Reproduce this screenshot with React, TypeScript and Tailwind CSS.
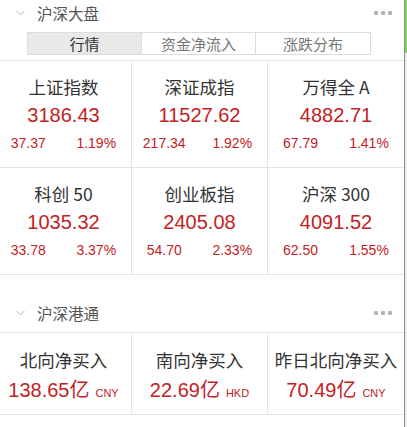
import React from "react";

const RED = "text-[#c2221f]";
const FONT = { fontFamily: '"Liberation Sans", "Noto Sans CJK SC", sans-serif' };

function Chevron() {
  return (
    <svg width="9" height="6" viewBox="0 0 9 6" className="shrink-0">
      <path d="M0.5 0.8 L4.5 4.8 L8.5 0.8" fill="none" stroke="#b0b0b0" strokeWidth="1" />
    </svg>
  );
}

function Dots() {
  return (
    <div className="flex gap-[3px] mr-[12px]">
      <span className="w-[4px] h-[4px] bg-[#b4b4b4] rounded-[1px]" />
      <span className="w-[4px] h-[4px] bg-[#b4b4b4] rounded-[1px]" />
      <span className="w-[4px] h-[4px] bg-[#b4b4b4] rounded-[1px]" />
    </div>
  );
}

function SectionTitle({ title }: { title: string }) {
  return (
    <div className="flex items-center h-[26px] pl-[16px]">
      <Chevron />
      <span className="ml-[12px] text-[15.5px] text-[#555] leading-[22px]" style={{ fontFamily: '"Noto Sans CJK SC", sans-serif' }}>
        {title}
      </span>
      <div className="flex-1" />
      <Dots />
    </div>
  );
}

type Idx = { name: string; value: string; chg: string; pct: string };

const rows: Idx[][] = [
  [
    { name: "上证指数", value: "3186.43", chg: "37.37", pct: "1.19%" },
    { name: "深证成指", value: "11527.62", chg: "217.34", pct: "1.92%" },
    { name: "万得全 A", value: "4882.71", chg: "67.79", pct: "1.41%" },
  ],
  [
    { name: "科创 50", value: "1035.32", chg: "33.78", pct: "3.37%" },
    { name: "创业板指", value: "2405.08", chg: "54.70", pct: "2.33%" },
    { name: "沪深 300", value: "4091.52", chg: "62.50", pct: "1.55%" },
  ],
];

const flows = [
  { name: "北向净买入", value: "138.65亿", unit: "CNY" },
  { name: "南向净买入", value: "22.69亿", unit: "HKD" },
  { name: "昨日北向净买入", value: "70.49亿", unit: "CNY" },
];

function IndexCard({ d, last }: { d: Idx; last: boolean }) {
  return (
    <div className={`flex flex-col items-center pt-[15px] ${last ? "" : "border-r border-[#e4e4e4]"}`}>
      <div className="text-[17.5px] leading-[22px] text-[#333]" style={{ fontFamily: '"Noto Sans CJK SC", sans-serif' }}>
        {d.name}
      </div>
      <div className={`mt-[3px] text-[20px] leading-[28px] ${RED}`}>{d.value}</div>
      <div className={`mt-[5px] w-full grid grid-cols-2 text-[14px] leading-[18px] ${RED}`}>
        <div className="text-center pr-[3px]">{d.chg}</div>
        <div className="text-center pr-[2px]">{d.pct}</div>
      </div>
    </div>
  );
}

function FlowCard({ d, last }: { d: (typeof flows)[number]; last: boolean }) {
  return (
    <div className={`flex flex-col items-center pt-[16px] ${last ? "" : "border-r border-[#e4e4e4]"}`}>
      <div className="text-[17.5px] leading-[22px] text-[#333] whitespace-nowrap" style={{ fontFamily: '"Noto Sans CJK SC", sans-serif' }}>
        {d.name}
      </div>
      <div className={`mt-[5px] flex items-baseline leading-[28px] ${RED}`}>
        <span className="text-[20px]">{d.value}</span>
        <span className="ml-[6px] text-[11px]">{d.unit}</span>
      </div>
    </div>
  );
}

export default function App() {
  return (
    <div className="w-[407px] h-[427px] flex bg-white overflow-hidden" style={FONT}>
      <div className="w-[404px] flex flex-col overflow-hidden">
        <div className="border-b border-[#e6e6e6] pb-[5px]">
          <SectionTitle title="沪深大盘" />
          <div className="mt-[6px] ml-[27px] w-[344px] h-[23px] grid grid-cols-3 border border-[#dcdcdc]" style={{ fontFamily: '"Noto Sans CJK SC", sans-serif' }}>
            <div className="bg-[#e9e9e9] text-[#333] text-[15px] leading-[21px] text-center border-r border-[#dcdcdc]">行情</div>
            <div className="text-[#777] text-[15px] leading-[21px] text-center border-r border-[#dcdcdc]">资金净流入</div>
            <div className="text-[#777] text-[15px] leading-[21px] text-center">涨跌分布</div>
          </div>
        </div>
        {rows.map((r, i) => (
          <div key={i} className="ml-[-4px] w-[408px] h-[107px] grid grid-cols-3 border-b border-[#e4e4e4]">
            {r.map((d, j) => (
              <IndexCard key={j} d={d} last={j === 2} />
            ))}
          </div>
        ))}
        <div className="h-[58px] pt-[25px] border-b border-[#e6e6e6]">
          <SectionTitle title="沪深港通" />
        </div>
        <div className="ml-[-4px] w-[408px] h-[82px] grid grid-cols-3 border-b border-[#e4e4e4]">
          {flows.map((d, j) => (
            <FlowCard key={j} d={d} last={j === 2} />
          ))}
        </div>
      </div>
      <div className="w-[1px] bg-[#8e8e8e]" />
      <div className="w-[2px] flex flex-col bg-[#ececec]">
        <div className="h-[53px] bg-[#7ed65a]" />
      </div>
    </div>
  );
}
